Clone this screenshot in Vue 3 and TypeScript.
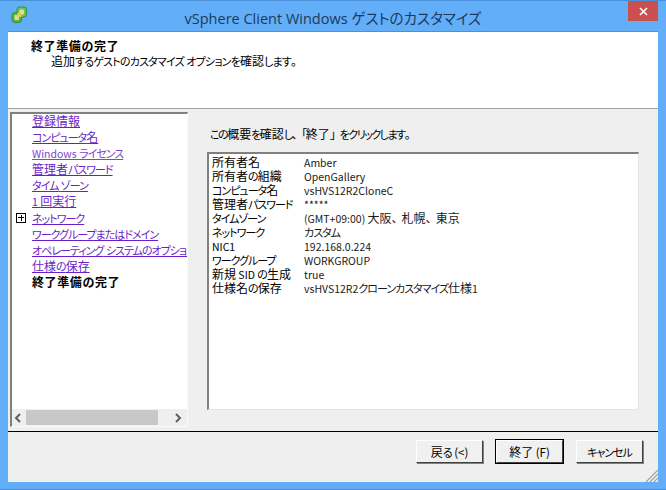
<script setup lang="ts">
const steps: string[] = ['登録情報','コンピュータ名','Windows ライセンス','管理者パスワード','タイム ゾーン','1 回実行','ネットワーク','ワークグループまたはドメイン','オペレーティング システムのオプション','仕様の保存']
const rows: [string,string][] = [
['所有者名','Amber'],['所有者の組織','OpenGallery'],['コンピュータ名','vsHVS12R2CloneC'],['管理者パスワード','*****'],['タイムゾーン','(GMT+09:00) 大阪、札幌、東京'],['ネットワーク','カスタム'],['NIC1','192.168.0.224'],['ワークグループ','WORKGROUP'],['新規 SID の生成','true'],['仕様名の保存','vsHVS12R2クローンカスタマイズ仕様1']]

interface Run { t: string; c: string }
function runs(text: string): Run[] {
  const parts = text.match(/[\u3041-\u30ff]+|[、。「」]+|[\u4e00-\u9fff]+|[^\u3041-\u30ff、。「」\u4e00-\u9fff]+/g) ?? []
  return parts.map((t) => {
    if (/^[\u3041-\u30ff]/.test(t)) return { t, c: 'kana' }
    if (/^[、。「」]/.test(t)) return { t, c: 'pun' }
    if (/^[\u4e00-\u9fff]/.test(t)) return { t, c: 'kanji' }
    return { t, c: 'latin' }
  })
}
</script>

<template>
  <div class="win">
    <div class="titlebar">
      <svg class="logo" width="18" height="18" viewBox="0 0 18 18">
        <rect x="2" y="6.5" width="9.5" height="10" rx="2.5" fill="#58b04a" stroke="#3f8a38"/>
        <rect x="7" y="1" width="9.5" height="10" rx="2.5" fill="#6cc052" stroke="#3f8a38"/>
        <rect x="4.5" y="9" width="4.5" height="5" rx="1" fill="#cfe6a0"/>
        <rect x="9.5" y="3.5" width="4.5" height="5" rx="1" fill="#cfe6a0"/>
        <rect x="7.2" y="6.8" width="4.2" height="4.4" rx="0.8" fill="#f0c840"/>
      </svg>
      <div class="title">vSphere Client Windows ゲストのカスタマイズ</div>
      <div class="close">
        <svg width="9" height="9" viewBox="0 0 9 9"><path d="M1 1 L8 8 M8 1 L1 8" stroke="#fff" stroke-width="1.7"/></svg>
      </div>
    </div>
    <div class="client">
      <header class="head">
        <div class="h1">終了準備の完了</div>
        <div class="h2"><span v-for="(p,j) in runs('追加するゲストのカスタマイズ オプションを確認します。')" :key="j" :class="p.c">{{ p.t }}</span></div>
      </header>
      <div class="main">
        <aside class="tree">
          <div class="treelist">
            <div v-for="(s,i) in steps" :key="s" class="titem">
              <span v-if="i===6" class="plus"></span>
              <a class="link" :class="{light: i===2}"><span v-for="(p,j) in runs(s)" :key="j" :class="p.c">{{ p.t }}</span></a>
            </div>
            <div class="titem"><b class="cur">終了準備の完了</b></div>
          </div>
          <div class="hscroll">
            <svg width="8" height="10" viewBox="0 0 8 10"><path d="M6 1 L2 5 L6 9" fill="none" stroke="#606060" stroke-width="2"/></svg>
            <div class="track"><div class="thumb"></div></div>
            <svg width="8" height="10" viewBox="0 0 8 10"><path d="M2 1 L6 5 L2 9" fill="none" stroke="#606060" stroke-width="2"/></svg>
          </div>
        </aside>
        <section class="right">
          <p class="intro"><span v-for="(p,j) in runs('この概要を確認し、「終了」をクリックします。')" :key="j" :class="p.c">{{ p.t }}</span></p>
          <div class="list">
            <div v-for="r in rows" :key="r[0]" class="row">
              <span class="k"><span v-for="(p,j) in runs(r[0])" :key="j" :class="p.c">{{ p.t }}</span></span>
              <span class="v"><span v-for="(p,j) in runs(r[1])" :key="j" :class="p.c">{{ p.t }}</span></span>
            </div>
          </div>
        </section>
      </div>
      <footer class="foot">
        <button class="btn"><span class="kanji">戻</span><span class="kana">る</span><span class="latin wide"> (&lt;)</span></button>
        <button class="btn def"><span class="kanji">終了</span><span class="latin wide"> (F)</span></button>
        <button class="btn"><span class="kana">キャンセル</span></button>
        <svg class="grip" width="13" height="13" viewBox="0 0 13 13"><path d="M13 1 L1 13 M13 5 L5 13 M13 9 L9 13" stroke="#a0a0a0" stroke-width="1.2"/></svg>
      </footer>
    </div>
  </div>
</template>

<style>
html, body { margin: 0; padding: 0; background: #62aef8; }
</style>
<style scoped>
.win { width: 666px; height: 490px; box-sizing: border-box; background: #62aef8; border-top: 1px solid #4a90d8; border-bottom: 1px solid #4a90d8; display: flex; flex-direction: column; font-family: "Noto Sans CJK JP", "Noto Sans", sans-serif; font-size: 11.5px; color: #000; overflow: hidden; }
.kana { font-size: 11px; letter-spacing: -1px; font-feature-settings: "palt"; }
.kanji { font-size: 12px; }
.latin { font-size: 10.5px; }
.latin.wide { font-size: 11.5px; }
.pun { font-size: 12px; letter-spacing: -2px; }
.titlebar { height: 30px; flex: none; display: flex; align-items: center; position: relative; justify-content: center; }
.logo { position: absolute; left: 10px; top: 5px; }
.title { font-size: 14.5px; color: #1d3a5c; font-family: "Open Sans", "Noto Sans CJK JP", sans-serif; font-feature-settings: "palt"; padding-top: 2px; }
.close { position: absolute; left: 628px; top: 0; width: 30px; height: 20px; background: #c9504e; display: flex; align-items: center; justify-content: center; }
.client { flex: 1; margin: 0 8px 7px; background: #efefef; display: flex; flex-direction: column; border-top: 1px solid #4a90d8; min-height: 0; }
.head { height: 77px; flex: none; background: #fff; box-sizing: border-box; border-bottom: 1px solid #a0a0a0; padding: 6px 0 0 23px; }
.h1 { font-weight: 700; font-size: 12px; letter-spacing: 0.6px; line-height: 15px; }
.h2 { padding-left: 20px; line-height: 15px; white-space: nowrap; }
.h2 .kana { letter-spacing: -0.8px; }
.main { height: 323px; flex: none; display: flex; border-bottom: 1px solid #000; box-sizing: border-box; padding: 3px 0 0 2px; }
.tree { width: 178px; height: 315px; box-sizing: border-box; background: #fff; border-top: 2px solid #808080; border-left: 2px solid #808080; border-right: 1px solid #fafafa; border-bottom: 1px solid #fafafa; display: flex; flex-direction: column; }
.treelist { flex: 1; padding-left: 20px; overflow: hidden; }
.titem { height: 16.1px; line-height: 14px; white-space: nowrap; position: relative; }
.link { color: #6a1fc8; text-decoration: underline; }
.link.light { color: #7f45d0; }
.cur { font-weight: 700; color: #000; font-size: 12px; letter-spacing: 0.6px; }
.plus { position: absolute; left: -16px; top: 2px; width: 8px; height: 8px; border: 1px solid #000; background: linear-gradient(#000,#000) center/6px 1px no-repeat, linear-gradient(#000,#000) center/1px 6px no-repeat, #fff; }
.hscroll { height: 17px; background: #efefef; display: flex; align-items: center; flex: none; padding: 0 5px 0 2px; gap: 4px; }
.track { flex: 1; height: 15px; }
.thumb { width: 132px; height: 15px; background: #c8c8c8; }
.right { flex: 1; padding: 0 0 0 19px; min-width: 0; }
.intro { margin: 14px 0 0 3px; line-height: 16px; white-space: nowrap; }
.intro .kana { letter-spacing: -1.5px; }
.list { margin-top: 10px; height: 258px; box-sizing: border-box; background: #fff; border-top: 2px solid #808080; border-left: 2px solid #808080; border-right: 1px solid #e4e4e4; border-bottom: 1px solid #e4e4e4; padding: 1px 0 0 3px; width: 432px; }
.row { display: flex; height: 14px; line-height: 14px; white-space: nowrap; }
.k { width: 92px; flex: none; }
.v { color: #1a1a1a; }
.foot { flex: 1; display: flex; justify-content: flex-end; padding: 8px 15px 0 0; gap: 13px; position: relative; box-sizing: border-box; }
.btn { width: 67px; height: 23px; box-sizing: border-box; background: #f0f0f0; border: 1px solid; border-color: #fff #404040 #404040 #fff; box-shadow: 1px 1px 0 #808080; font: inherit; font-size: 11.5px; padding: 0; color: #000; }
.btn.def { outline: 1px solid #000; }
.grip { position: absolute; right: 0; bottom: 0; }
</style>
